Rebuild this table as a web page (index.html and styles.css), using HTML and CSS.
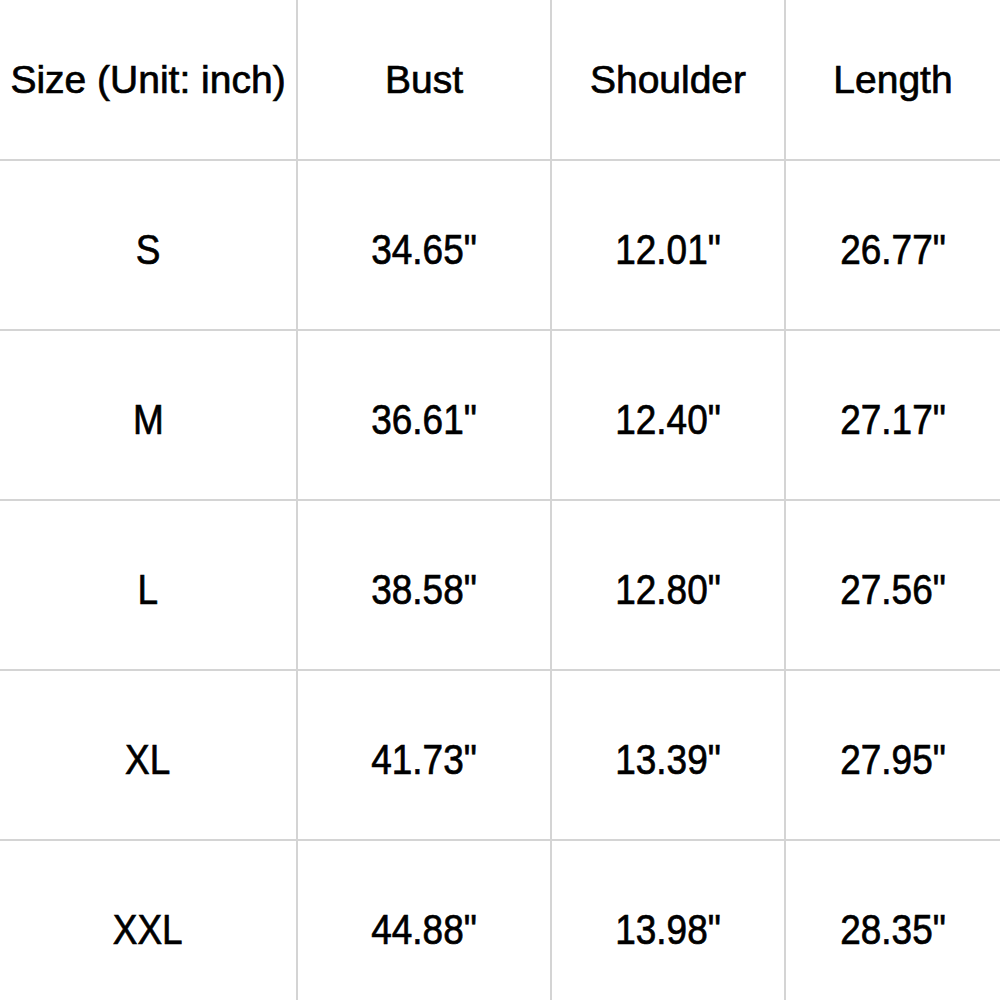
FILE: index.html
```html
<!DOCTYPE html>
<html>
<head>
<meta charset="utf-8">
<link rel="stylesheet" href="styles.css">
</head>
<body>
<div class="chart">
  <div class="cell head"><span>Size (Unit: inch)</span></div>
  <div class="cell head"><span>Bust</span></div>
  <div class="cell head"><span>Shoulder</span></div>
  <div class="cell head"><span>Length</span></div>

  <div class="cell"><span>S</span></div>
  <div class="cell"><span>34.65"</span></div>
  <div class="cell"><span>12.01"</span></div>
  <div class="cell"><span>26.77"</span></div>

  <div class="cell"><span>M</span></div>
  <div class="cell"><span>36.61"</span></div>
  <div class="cell"><span>12.40"</span></div>
  <div class="cell"><span>27.17"</span></div>

  <div class="cell"><span>L</span></div>
  <div class="cell"><span>38.58"</span></div>
  <div class="cell"><span>12.80"</span></div>
  <div class="cell"><span>27.56"</span></div>

  <div class="cell"><span>XL</span></div>
  <div class="cell"><span>41.73"</span></div>
  <div class="cell"><span>13.39"</span></div>
  <div class="cell"><span>27.95"</span></div>

  <div class="cell"><span>XXL</span></div>
  <div class="cell"><span>44.88"</span></div>
  <div class="cell"><span>13.98"</span></div>
  <div class="cell"><span>28.35"</span></div>
</div>
</body>
</html>
```
FILE: styles.css
```css
html, body {
  margin: 0;
  padding: 0;
  background: #ffffff;
  overflow: hidden;
}
.chart {
  width: 1000px;
  display: grid;
  grid-template-columns: 296px 252px 232px 214px;
  grid-template-rows: 159px repeat(5, 168px);
  column-gap: 2px;
  row-gap: 2px;
  background: #d4d4d4;
  font-family: "Liberation Sans", Arial, sans-serif;
  color: #000;
}
.cell {
  background: #fff;
  display: flex;
  align-items: center;
  justify-content: center;
  font-size: 42px;
  line-height: 1;
  padding-top: 10px;
  -webkit-text-stroke: 0.7px #000;
}
.cell span {
  display: inline-block;
  transform: scaleX(0.88);
  white-space: nowrap;
}
.cell.head {
  font-size: 39px;
  padding-top: 0;
}
.cell.head span {
  transform: none;
}
```
